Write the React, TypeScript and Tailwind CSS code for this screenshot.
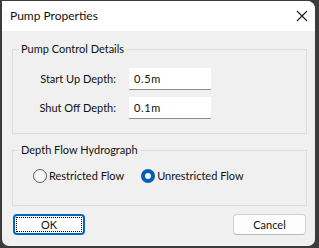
import React from 'react';

function Radio({ checked, label }: { checked: boolean; label: string }) {
  return (
    <label className="flex items-center gap-[2px] whitespace-nowrap">
      {checked ? (
        <span className="w-[14px] h-[14px] rounded-full bg-[#005fb8] flex items-center justify-center">
          <span className="w-[6px] h-[6px] rounded-full bg-white" />
        </span>
      ) : (
        <span className="w-[14px] h-[14px] rounded-full border border-[#5e5e5e] bg-[#f7f7f7]" />
      )}
      <span>{label}</span>
    </label>
  );
}

export default function App() {
  const font = { fontFamily: 'Lato, "Noto Sans", sans-serif' };
  return (
    <div className="w-[319px] h-[248px] bg-[#3b3b3b] pt-[1px] pl-[2px] pr-[4px] pb-[2px]" style={font}>
      <div className="w-full h-full bg-[#f0f0f0] rounded-tr-[8px] rounded-b-[7px] overflow-hidden flex flex-col text-[11px] text-[#111]">
        {/* Title bar */}
        <div className="h-[30px] bg-white flex items-center justify-between pl-[8px] pr-[5px] shrink-0">
          <span className="text-[12px]">Pump Properties</span>
          <svg width="12" height="12" viewBox="0 0 12 12" className="mr-[2px]">
            <path d="M1 1 L11 11 M11 1 L1 11" stroke="#1a1a1a" strokeWidth="1.1" />
          </svg>
        </div>

        <div className="flex flex-col pl-[10px] pr-[8px] pt-[10px]">
          {/* Pump control */}
          <fieldset className="border border-[#dcdcdc]">
            <legend className="ml-[6px] px-[2px] leading-[16px] whitespace-nowrap">Pump Control Details</legend>
            <div className="flex flex-col gap-[7px] pt-[11px] pb-[14px] pl-[24px]">
              <div className="flex items-center">
                <span className="w-[79px] text-right whitespace-nowrap">Start Up Depth:</span>
                <div className="ml-[13px] w-[82px] h-[22px] bg-white border-b border-[#8d8d8d] pl-[5px] pt-[4px] leading-[13px] tracking-[0.6px]">0.5m</div>
              </div>
              <div className="flex items-center">
                <span className="w-[79px] text-right whitespace-nowrap">Shut Off Depth:</span>
                <div className="ml-[13px] w-[82px] h-[22px] bg-white border-b border-[#8d8d8d] pl-[5px] pt-[4px] leading-[13px] tracking-[0.6px]">0.1m</div>
              </div>
            </div>
          </fieldset>

          {/* Depth flow */}
          <fieldset className="border border-[#dcdcdc] mt-[8px]">
            <legend className="ml-[6px] px-[2px] leading-[16px] whitespace-nowrap">Depth Flow Hydrograph</legend>
            <div className="flex items-center gap-[17px] pt-[10px] pb-[21px] pl-[20px] h-[47px]">
              <Radio checked={false} label="Restricted Flow" />
              <Radio checked={true} label="Unrestricted Flow" />
            </div>
          </fieldset>

          {/* Buttons */}
          <div className="flex justify-between mt-[8px] pl-[1px] pr-[1px]">
            <button className="w-[72px] h-[21px] rounded-[4px] border-2 border-[#0067c0] bg-white p-[1px]">
              <span className="w-full h-full border border-dotted border-black flex items-center justify-center leading-none">OK</span>
            </button>
            <button className="w-[73px] h-[21px] rounded-[4px] border border-[#d0d0d0] border-b-[#b8b8b8] bg-[#fdfdfd] flex items-center justify-center leading-none">
              Cancel
            </button>
          </div>
        </div>
      </div>
    </div>
  );
}
